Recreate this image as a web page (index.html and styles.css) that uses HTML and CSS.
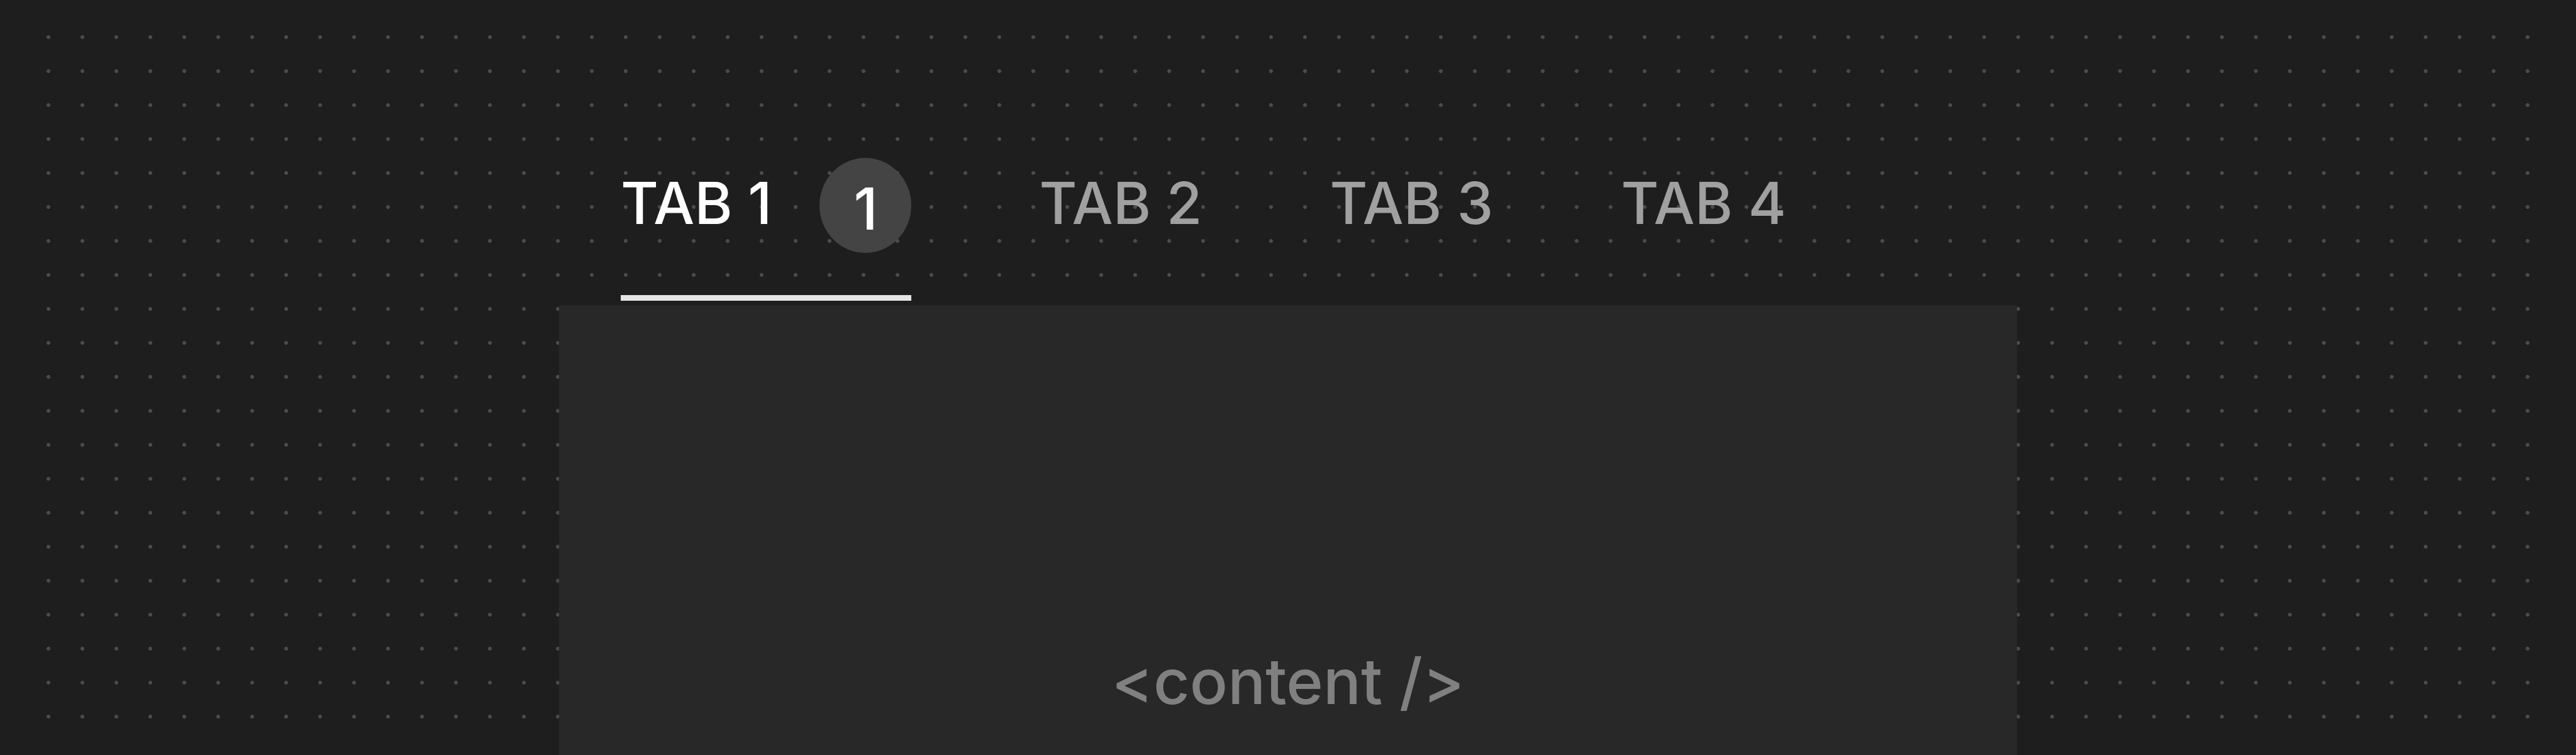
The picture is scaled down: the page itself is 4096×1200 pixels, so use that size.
FILE: index.html
```html
<!DOCTYPE html>
<html lang="en">
<head>
<meta charset="utf-8">
<title>Tabs</title>
<link rel="stylesheet" href="styles.css">
</head>
<body>
<div class="canvas">
  <div class="column">
    <div class="tabs" role="tablist">
      <div class="tab active" role="tab"><span class="label">TAB 1</span><span class="badge">1</span></div>
      <div class="tab" role="tab"><span class="label">TAB 2</span></div>
      <div class="tab" role="tab"><span class="label">TAB 3</span></div>
      <div class="tab" role="tab"><span class="label">TAB 4</span></div>
    </div>
    <div class="panel" role="tabpanel">
      <span class="placeholder">&lt;content /&gt;</span>
    </div>
  </div>
</div>
</body>
</html>
```
FILE: styles.css
```css
html, body {
  margin: 0;
  padding: 0;
  background: #1e1e1e;
}
body {
  width: 4096px;
  height: 1200px;
  overflow: hidden;
  font-family: Inter, "Liberation Sans", sans-serif;
}
.canvas {
  box-sizing: border-box;
  width: 4096px;
  height: 1200px;
  padding: 32px 50px;
  overflow: hidden;
  background-color: #1e1e1e;
  background-image: radial-gradient(circle at center, #4b4b4b 0, #4b4b4b 2.6px, rgba(75,75,75,0) 3.4px);
  background-size: 54px 54px;
  background-origin: content-box;
  background-clip: content-box;
}
.column {
  width: 2318px;
  margin: 0 auto;
  padding-top: 219px;
}
.tabs {
  display: flex;
  padding-left: 98px;
  gap: 203px;
}
.tab {
  display: flex;
  align-items: center;
  height: 151px;
  padding-bottom: 67px;
  border-bottom: 9px solid transparent;
  color: #a0a0a0;
  font-size: 92px;
  font-weight: 500;
  line-height: 1;
}
.tab.active {
  color: #ffffff;
  border-bottom-color: #e5e5e5;
}
.label {
  margin-bottom: 7px;
  white-space: nowrap;
}
.badge {
  box-sizing: border-box;
  display: flex;
  align-items: center;
  justify-content: center;
  width: 146px;
  height: 151px;
  margin-left: 76px;
  padding-top: 10px;
  border-radius: 50%;
  background: #444444;
  color: #ffffff;
}
.panel {
  margin-top: 7px;
  height: 1196px;
  background: #282828;
  display: flex;
  align-items: center;
  justify-content: center;
}
.placeholder {
  color: #808080;
  font-size: 100px;
  font-weight: 500;
  line-height: 1;
}
```
